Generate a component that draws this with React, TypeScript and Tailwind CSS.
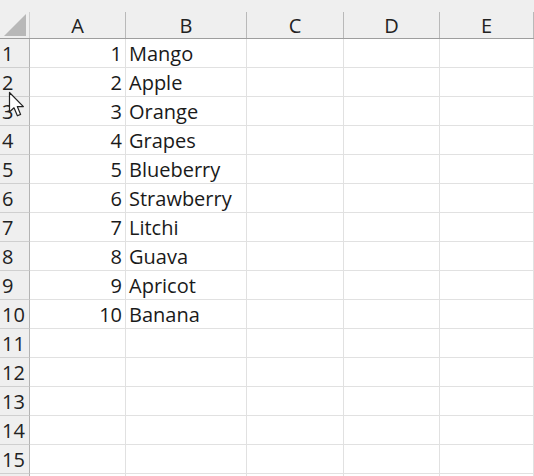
import React from "react";

const COLS = [
  { key: "A", w: "w-[96px]" },
  { key: "B", w: "w-[121px]" },
  { key: "C", w: "w-[97px]" },
  { key: "D", w: "w-[96px]" },
  { key: "E", w: "w-[94px]" },
];

const FRUITS = [
  "Mango",
  "Apple",
  "Orange",
  "Grapes",
  "Blueberry",
  "Strawberry",
  "Litchi",
  "Guava",
  "Apricot",
  "Banana",
];

const ROWS = Array.from({ length: 16 }, (_, i) => i + 1);

function Cursor() {
  return (
    <svg
      className="absolute left-[8px] top-[91px] pointer-events-none"
      width="20"
      height="28"
      viewBox="0 0 20 28"
    >
      <path
        d="M1.5 1.5 L1.5 21 L6 16.8 L9.4 24.8 L12.6 23.4 L9.3 15.6 L15.4 15.6 Z"
        fill="#ffffff"
        stroke="#222222"
        strokeWidth="1.2"
        strokeLinejoin="round"
      />
    </svg>
  );
}

export default function App() {
  return (
    <div
      className="relative w-[534px] h-[476px] overflow-hidden bg-white text-[#1a1a1a]"
      style={{ fontFamily: '"Open Sans", "Liberation Sans", sans-serif' }}
    >
      {/* column header */}
      <div className="bg-[#efefef]">
        <div className="h-[12px]" />
        <div className="flex h-[27px] border-b border-[#9e9e9e]">
          <div className="w-[30px] shrink-0 border-r border-[#d0d0d0] flex items-end justify-end pr-[3px] pb-[2px]">
            <svg width="22" height="22" viewBox="0 0 22 22">
              <polygon points="22,0 22,22 0,22" fill="#b8b8b8" />
            </svg>
          </div>
          {COLS.map((c) => (
            <div
              key={c.key}
              className={`${c.w} shrink-0 border-r border-[#b9b9b9] flex items-center justify-center pt-[1px] text-[20px] leading-none text-[#222]`}
            >
              {c.key}
            </div>
          ))}
        </div>
      </div>

      {/* rows */}
      {ROWS.map((r) => (
        <div key={r} className="flex h-[29px]">
          <div className="w-[30px] shrink-0 bg-[#efefef] border-r border-b border-r-[#b4b4b4] border-b-[#cfcfcf] flex items-center pl-[2px] pt-[2px] text-[20px] leading-none text-[#222]">
            {r <= 15 ? r : ""}
          </div>
          {COLS.map((c, ci) => (
            <div
              key={c.key}
              className={`${c.w} shrink-0 border-r border-b border-[#e1e1e1] flex items-center pt-[2px] text-[20px] leading-none overflow-visible whitespace-nowrap ${
                ci === 0 ? "justify-end pr-[3px]" : "pl-[3px]"
              }`}
            >
              {r <= 10 && ci === 0 && r}
              {r <= 10 && ci === 1 && FRUITS[r - 1]}
            </div>
          ))}
        </div>
      ))}

      <Cursor />
    </div>
  );
}
